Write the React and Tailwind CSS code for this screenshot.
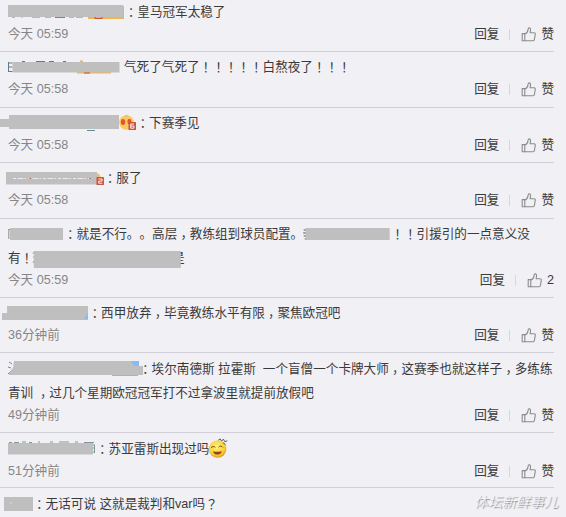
const colors = {
  mask: "#bfbfbf",
  teal: "#5f8f98",
  orange: "#f3b44e",
  red: "#cf4a38",
  blue: "#86bdf0",
};

// Wide punctuation sits in the middle of its cell
function Text({ children }) {
  return children.split(/([！：？，])/).map((part, i) => {
    if (part === "，") {
      return (
        <span key={i} className="relative top-[4px] font-['Noto_Sans_CJK_TC',sans-serif] leading-none">
          {part}
        </span>
      );
    }
    if (/^[！：？]$/.test(part)) {
      return (
        <span key={i} className="relative top-px font-['Noto_Sans_CJK_JP',sans-serif] leading-none">
          {part}
        </span>
      );
    }
    return part;
  });
}

// Inline block that hides a piece of a line, drawn in the line's own coordinates
function Mask({ from = 8, to, children }) {
  return (
    <svg
      width={to - from}
      height="24"
      viewBox={`${from} 0 ${to - from} 24`}
      className="relative inline-block overflow-visible align-top"
      aria-hidden="true"
    >
      {children}
    </svg>
  );
}

function Box({ x, y, w, h, fill = colors.mask }) {
  return <rect x={x} y={y} width={w} height={h} fill={fill} />;
}

function Badge({ x, y, digit }) {
  return (
    <g transform={`translate(${x} ${y})`}>
      <rect width="7.5" height="8" rx="0.6" fill="#cd5540" />
      <path
        d={digit === 6 ? "M5.5 2H2.2v4.2h3.2V4H2.2" : "M2 2h3.6v2.1H2.2v2.1h3.6"}
        fill="none"
        stroke="#fff"
        strokeWidth="0.9"
      />
    </g>
  );
}

function ThumbIcon() {
  return (
    <svg width="15" height="15" viewBox="0 0 15 15" fill="none" stroke="#8c8c8c" strokeWidth="1.1" strokeLinejoin="round" className="relative top-[0.5px]">
      <path d="M1.2 6.6h2.6v7.2H1.2z" />
      <path d="M3.8 6.9C5.7 6.3 6.7 4.9 7 2.8c.1-1.2.4-1.9 1.2-1.9 1.2 0 1.5 1.1 1.3 2.4l-.4 2.4h3.9c1 0 1.4.6 1.3 1.4l-.9 5.4c-.1.8-.6 1.3-1.3 1.3H3.8" />
    </svg>
  );
}

function Grin() {
  return (
    <svg width="21" height="21" viewBox="0 0 21 21" className="relative top-[0.5px] -ml-px inline-block overflow-visible align-top">
      <defs>
        <radialGradient id="face" cx="45%" cy="38%" r="62%">
          <stop offset="0" stopColor="#fff07a" />
          <stop offset="0.7" stopColor="#fbd235" />
          <stop offset="1" stopColor="#e39a1c" />
        </radialGradient>
      </defs>
      <circle cx="9.6" cy="11" r="8.8" fill="url(#face)" />
      <path d="M3 9.8c1.1-1.5 3-1.7 4.3-.4M10.6 9.2c1.2-1.5 3.2-1.4 4.2.2" fill="none" stroke="#7b4a16" strokeWidth="1" />
      <path d="M5 13.2c3 1 6.2.8 8.8-.3-.3 2.4-2.1 3.7-4.5 3.7-2.2 0-3.8-1.1-4.3-3.4z" fill="#96401d" />
      <path d="M10.2 2.2l2-1.3 1.4 2.2 1.8-2 1.5 2.7 2.4-1.1M14.8 4.6l2.8 2" fill="none" stroke="#5b5b5b" strokeWidth="1" />
    </svg>
  );
}

function Comment({ time, likes = "赞", className, children }) {
  return (
    <article className={`border-b border-[#d0cfd8] ${className}`}>
      <div className="pl-2 leading-6 whitespace-pre">{children}</div>
      {time && (
        <div className="flex h-5 items-center justify-between pl-2 leading-5">
          <span className="text-[#868686]">{time}</span>
          <div className="flex items-center">
            <span>回复</span>
            <span className="mr-[11px] ml-[10px] h-[11px] w-px bg-[#d6d6dc]" />
            <ThumbIcon />
            <span className="ml-[5px]">{likes}</span>
          </div>
        </div>
      )}
    </article>
  );
}

export default function App() {
  return (
    <main className="relative h-[517px] w-[566px] overflow-hidden bg-[#f1f0f5] font-['Liberation_Sans','Noto_Sans_CJK_SC',sans-serif] text-[12.6px] text-[#3a3a3a] [text-spacing-trim:space-all]">
      <div className="w-[554px]">
        <Comment time="今天 05:59" className="h-[52px]">
          <Mask to={124.7}>
            <Box x={88} y={16} w={36} h={3} fill={colors.orange} />
            <Box x={120} y={6} w={4} h={12} fill={colors.orange} />
            <path d="M12 17h3M21 17l5-1M32 17h8M45 17h6M55 17.5h10M69 17h5M76 17h7" stroke={colors.teal} strokeWidth="1.2" />
            <Box x={8} y={5} w={115} h={12} />
            <path d="M95 17v1.5h7V17" stroke={colors.red} fill="none" />
          </Mask>
          <Text>：皇马冠军太稳了</Text>
        </Comment>

        <Comment time="今天 05:58" className="h-14 pt-[3px]">
          <Mask to={124}>
            <path d="M8.5 7v10M8.5 8h4M8.5 12h4M8.5 16.5h4M22 6.5h3M36 6.5h9M49 6.5h5M63 6.5h3" stroke="#5c7f87" fill="none" />
            <Box x={77} y={14} w={34} h={4.5} fill={colors.orange} />
            <Box x={80} y={5.5} w={3} h={2} fill={colors.orange} />
            <Box x={12.5} y={7} w={107} h={10.5} />
            <Box x={84} y={17.5} w={6} h={1} fill={colors.red} />
          </Mask>
          <Text>气死了气死了！！！！！白熬夜了！！！</Text>
        </Comment>

        <Comment time="今天 05:58" className="h-[55px] pt-[3px]">
          <Mask to={136.5}>
            <Box x={0} y={8} w={10} h={8} />
            <Box x={87} y={19} w={8} h={1} fill={colors.teal} />
            <circle cx="126.5" cy="11.5" r="7.3" fill="#fbc95d" />
            <circle cx="126.5" cy="5.2" r="1.4" fill="#dfc18a" />
            <ellipse cx="123" cy="11" rx="2.2" ry="3" fill="#e2562e" />
            <ellipse cx="129.4" cy="10.5" rx="2" ry="2.7" fill="#e2562e" />
            <Box x={9} y={4} w={110} h={14} />
            <Badge x={128.5} y={11} digit={6} />
          </Mask>
          <Text>：下赛季见</Text>
        </Comment>

        <Comment time="今天 05:58" className="h-14 pt-[3px]">
          <Mask to={103.7}>
            <path d="M94 6l5 2 4 6-5 5-4-2z" fill="#f4bd61" />
            <Box x={6} y={6} w={91} h={12.5} />
            <path d="M13 12.5h78" stroke="#ececee" strokeWidth="1" strokeDasharray="3 1.5 6 1 1.5 2" />
            <path d="M29 12.5h2M89 12.5h2" stroke="#bc7a62" />
            <Badge x={96.5} y={11} digit={2} />
          </Mask>
          <Text>：服了</Text>
        </Comment>

        <Comment time="今天 05:59" likes="2" className="h-[79px] pt-[3px]">
          <Mask to={63.9}>
            <path d="M8.8 7v10M8.8 7.5h2" stroke="#8b8b8b" fill="none" />
            <Box x={10} y={6} w={53} h={12} />
          </Mask>
          <Text>：就是不行。。高层，教练组到球员配置。</Text>
          <Mask from={303.3} to={391.5}>
            <path d="M304 8h4M303.5 11h4M304 14h3M305 17h3" stroke="#555" />
            <Box x={306} y={6} w={84} h={12} />
          </Mask>
          <Text>！！引援引的一点意义没</Text>
          <br />
          <Text>有！</Text>
          <Mask from={33.2} to={172}>
            <path d="M33 7h2M33.5 11h2M33 16h2" stroke="#777" />
            <Box x={34} y={5} w={147} h={17} />
          </Mask>
          是
        </Comment>

        <Comment time="36分钟前" className="h-[55px] pt-[3px]">
          <Mask to={88.5}>
            <Box x={2} y={12} w={6} h={7} />
            <Box x={7} y={5} w={81} h={14} />
            <path d="M88 12v6h-4z" fill={colors.blue} />
          </Mask>
          <Text>：西甲放弃，毕竟教练水平有限，聚焦欧冠吧</Text>
        </Comment>

        <Comment time="49分钟前" className="h-20 pt-[4px]">
          <Mask to={139}>
            <path d="M9 5l3 2M8 10l3 1M8 17l4-4" stroke={colors.teal} />
            <Box x={130} y={4} w={9} h={7} fill={colors.blue} />
            <Box x={112} y={17} w={26} h={2} fill={colors.blue} />
            <path d="M14 4h117l3 5h9v9H9V16l4-5z" fill={colors.mask} />
          </Mask>
          <Text>：埃尔南德斯 拉霍斯  一个盲僧一个卡牌大师，这赛季也就这样子，多练练</Text>
          <br />
          <Text>青训 ，过几个星期欧冠冠军打不过拿波里就提前放假吧</Text>
        </Comment>

        <Comment time="51分钟前" className="h-[55px] pt-[4px]">
          <Mask to={96}>
            <path d="M9 5.5h3M14 5.5h5M22 5h4M29 5.5h3M38 5h2M50 5h3M59 5h10M75 5h3M84 5.5h10M91 8h4M91 11h4M91 15h4M94.5 8v8" stroke="#7f979c" fill="none" />
            <Box x={8} y={6} w={85} h={11.5} />
          </Mask>
          <Text>：苏亚雷斯出现过吗</Text>
          <Grin />
        </Comment>

        <Comment className="border-b-0 pt-[4px]">
          <Mask to={33}>
            <Box x={4} y={5} w={29} h={14} />
            <circle cx="11" cy="11" r="1" fill="#d0d0d0" />
          </Mask>
          <Text>：无话可说 这就是裁判和var吗？</Text>
        </Comment>
      </div>

      <span className="absolute right-[8px] bottom-[5px] text-[14px] leading-5 font-light text-[#f6f6fa] italic [text-shadow:1px_1px_1px_#7a7a7a]">
        体坛新鲜事儿
      </span>
    </main>
  );
}
